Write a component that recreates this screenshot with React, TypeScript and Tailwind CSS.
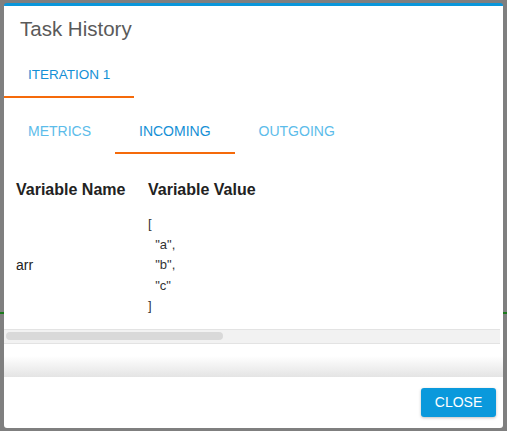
import React from 'react';

const subTabs = [
  { label: 'METRICS', active: false },
  { label: 'INCOMING', active: true },
  { label: 'OUTGOING', active: false },
];

const value = '[\n  "a",\n  "b",\n  "c"\n]';

export default function App() {
  return (
    <div
      className="relative h-[431px] w-[507px] overflow-hidden bg-[#7f7f7f] pt-[3px] pl-[4px]"
      style={{ fontFamily: '"Liberation Sans", Arial, Helvetica, sans-serif' }}
    >
      {/* page behind the backdrop */}
      <div className="absolute left-0 right-0 top-[312px] h-[2px] bg-[#1c7a1c]" />

      {/* Dialog */}
      <div className="relative z-10 flex h-[425px] w-[499px] flex-col overflow-hidden rounded-[3px] border-t-[3px] border-[#0a96da] bg-white">
        <div className="flex h-[46px] items-center px-[16px] text-[20.5px] text-[#5a5a5a]">Task History</div>

        {/* Iteration tabs */}
        <div className="flex h-[46px]">
          <div className="flex items-center border-b-2 border-[#f56a0a] px-[24px] pt-[2px] text-[13.5px] text-[#1590d6]">
            ITERATION 1
          </div>
        </div>

        {/* Sub tabs */}
        <div className="mt-[10px] flex h-[46px]">
          {subTabs.map(t => (
            <div
              key={t.label}
              className={`flex items-center px-[24px] pt-[2px] text-[14px] ${
                t.active ? 'border-b-2 border-[#f56a0a] text-[#1590d6]' : 'border-b-2 border-transparent text-[#5cbcea]'
              }`}
            >
              {t.label}
            </div>
          ))}
        </div>

        {/* Table */}
        <div className="mt-[16px] grid grid-cols-[132px_auto]">
          <div className="flex h-[40px] items-center pl-[12px] text-[16px] font-bold text-[#222]">Variable Name</div>
          <div className="flex h-[40px] items-center pl-[12px] text-[16px] font-bold text-[#222]">Variable Value</div>
          <div className="flex items-center pl-[12px] text-[14px] text-[#222]">arr</div>
          <div className="whitespace-pre py-[4px] pl-[12px] text-[13px] leading-[20.5px] text-[#333]">{value}</div>
        </div>

        {/* horizontal scrollbar */}
        <div className="mt-[8px] mr-[3px] flex h-[15px] items-center border-y border-[#e3e3e3] bg-[#f2f2f2] pl-[2px]">
          <div className="h-[8px] w-[217px] rounded-full bg-[#d9d9d9]" />
        </div>

        <div className="h-[12px]" />
        <div className="h-[21px] bg-gradient-to-b from-white to-[#e4e4e4]" />

        {/* Footer */}
        <div className="flex flex-1 items-center justify-end pr-[7px]">
          <button className="h-[29px] w-[75px] rounded-[3px] bg-[#0a99dc] text-[14px] text-white shadow-[0_1px_3px_rgba(0,0,0,0.25)]">
            CLOSE
          </button>
        </div>
      </div>
    </div>
  );
}
